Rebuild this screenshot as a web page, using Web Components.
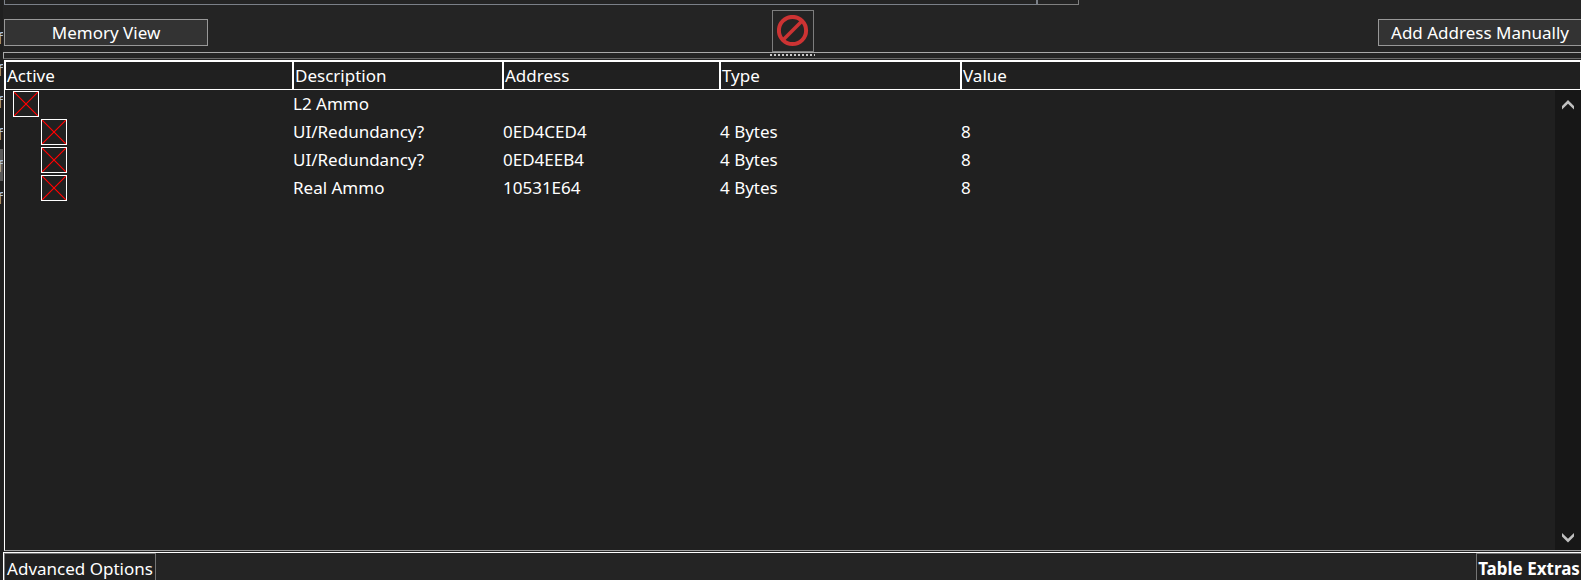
<!DOCTYPE html>
<html lang="en">
<head>
<meta charset="utf-8">
<title>Address table</title>
<style>
html, body { height: 100%; margin: 0; background: #242424; overflow: hidden; }
</style>
</head>
<body>
<address-app></address-app>
<script>
const define = (name, html, setup) => customElements.define(name, class extends HTMLElement {
  connectedCallback() {
    if (this.shadowRoot) return;
    const root = this.attachShadow({ mode: 'open' });
    root.innerHTML = html;
    if (setup) setup(this, root);
  }
});

/* Edge of the scan result list that sits left of the panel */
define('result-edge', `
<style>
  :host { display: block; width: 3px; overflow: hidden; background: #1f1f1f; padding-top: 21px; box-sizing: border-box; }
  div { height: 32px; display: flex; justify-content: flex-end; align-items: center; color: #b4c4d8; }
  div.on { background: #5a5a5a; }
</style>
<div>f</div><div>f</div><div>f</div><div>f</div><div class="on">f</div><div>f</div>`);

/* Lower edge of the panel above, with its small end segment */
define('upper-edge', `
<style>
  :host { display: flex; height: 5px; width: calc(68% + 2px); margin-left: 1px; }
  div { box-sizing: border-box; border: 1px solid #7b8088; border-top: 0; }
  .main { flex: 1; border-right-width: 2px; }
  .end { width: 41px; border-color: #808080; border-left: 0; }
</style>
<div class="main"></div><div class="end"></div>`);

define('tool-button', `
<style>
  :host { display: block; }
  button { box-sizing: border-box; width: 100%; height: 100%; margin: 0; padding: 0; font: inherit; color: #fff;
    background: var(--face, #333); border: 1px solid var(--edge, #989898); display: flex; align-items: center; justify-content: center; white-space: nowrap; }
</style>
<button type="button"><slot></slot></button>`, (host, root) => {
  const label = host.getAttribute('label');
  if (label) root.querySelector('button').setAttribute('aria-label', label);
});

define('tool-row', `
<style>
  :host { display: grid; grid-template-columns: 1fr auto 1fr; height: 47px; margin: 0 -1px 0 1px; align-items: start; box-sizing: border-box; padding-top: 5px; }
  .side { width: 204px; height: 27px; margin-top: 9px; }
  .right { justify-self: end; }
  .stop { width: 42px; height: 42px; --face: #242424; --edge: #7d7d7d; }
  svg { display: block; }
</style>
<tool-button class="side">Memory View</tool-button>
<tool-button class="stop" label="Delete selected addresses"><svg width="32" height="32" viewBox="0 0 32 32" fill="none" stroke="#cc3333" stroke-width="4"><circle cx="15.5" cy="15.5" r="13.6"/><path d="M6 25L25 6" stroke-width="3.6"/></svg></tool-button>
<tool-button class="side right">Add Address Manually</tool-button>`);

/* Splitter strip with a dotted grip under the stop button */
define('split-bar', `
<style>
  :host { display: flex; justify-content: center; height: 7px; box-sizing: border-box; border: solid #a9a9a9; border-width: 1px 0 1px 1px; border-bottom-color: #6a6a6a; }
  i { width: 45px; height: 2px; margin-top: 1px; background: repeating-linear-gradient(90deg, #c8c8c8 0 2px, transparent 2px 4px); }
</style><i></i>`);

define('scroll-strip', `
<style>
  :host { display: flex; flex-direction: column; justify-content: space-between; background: #171717; box-sizing: border-box; padding: 9px 0 6px; }
  button { display: flex; justify-content: center; width: 100%; height: 12px; padding: 0; border: 0; background: none; }
</style>
<button type="button" aria-label="Scroll up"><svg width="12" height="12" viewBox="0 0 12 12" fill="#c0c0c0"><path d="M6 1L12 7V10.5L6 4.8L0 10.5V7Z"/></svg></button>
<button type="button" aria-label="Scroll down"><svg width="12" height="12" viewBox="0 0 12 12" fill="#c0c0c0"><path d="M6 10.5L12 4.5V1L6 6.7L0 1V4.5Z"/></svg></button>`);

define('address-table', `
<style>
  :host { display: grid; grid-template: 30px 1fr / 1fr 26px; align-items: start; flex: 1; min-height: 0; margin: 1px 0 0 1px; background: #202020; border: solid #fff; border-width: 0 0 1px 1px; border-bottom-color: #a0a0a0; }
  scroll-strip { grid-area: 2 / 2; align-self: stretch; }
  table { grid-area: 1 / 1 / 3 / 3; border-collapse: separate; border-spacing: 0; table-layout: fixed; width: 100%; color: #fff; }
  .c1 { width: 287px; } .c2 { width: 210px; } .c3 { width: 217px; } .c4 { width: 241px; }
  th { box-sizing: border-box; height: 30px; padding: 0 0 0 1px; font-weight: 400; text-align: left; line-height: 24px; border: solid #fff; border-width: 2px 0 1px 2px; }
  th:first-child { border-left-width: 1px; }
  th:last-child { border-right-width: 1px; }
  td { height: 28px; padding: 0 0 0 1px; line-height: 28px; }
  td:first-child { padding-left: 8px; }
  tr.child td:first-child { padding-left: 36px; }
  input { appearance: none; display: block; box-sizing: border-box; width: 26px; height: 26px; margin: 0; border: 1px solid #fff;
    background: linear-gradient(45deg, transparent calc(50% - 1px), #f00 50%, transparent calc(50% + 1px)), linear-gradient(-45deg, transparent calc(50% - 1px), #f00 50%, transparent calc(50% + 1px)); }
</style>
<table>
<colgroup><col class="c1"><col class="c2"><col class="c3"><col class="c4"><col></colgroup>
<thead><tr><th>Active</th><th>Description</th><th>Address</th><th>Type</th><th>Value</th></tr></thead>
<tbody></tbody></table>
<scroll-strip></scroll-strip>`, (host, root) => {
  const rows = [
    ['L2 Ammo', '', '', ''],
    ['UI/Redundancy?', '0ED4CED4', '4 Bytes', '8'],
    ['UI/Redundancy?', '0ED4EEB4', '4 Bytes', '8'],
    ['Real Ammo', '10531E64', '4 Bytes', '8']
  ];
  root.querySelector('tbody').innerHTML = rows.map((r, i) =>
    `<tr class="${i ? 'child' : ''}"><td><input type="checkbox" aria-label="${r[0]} active"></td>${r.map(c => `<td>${c}</td>`).join('')}</tr>`).join('');
});

define('bottom-bar', `
<style>
  :host { display: flex; justify-content: space-between; height: 28px; box-sizing: border-box; margin-top: 1px; border: solid #fff; border-width: 1px 0 0 1px; overflow: hidden; }
  tool-button { height: 30px; --face: #202020; --edge: #747474; }
  .adv { width: 152px; } .extra { width: 106px; margin-right: -1px; font-weight: 700; }
</style>
<tool-button class="adv">Advanced Options</tool-button><tool-button class="extra">Table Extras</tool-button>`);

define('address-app', `
<style>
  :host { display: flex; height: 100%; font: 17px "Noto Sans", sans-serif; color: #fff; }
  main { flex: 1; min-width: 0; display: flex; flex-direction: column; }
</style>
<result-edge></result-edge>
<main><upper-edge></upper-edge><tool-row></tool-row><split-bar></split-bar><address-table></address-table><bottom-bar></bottom-bar></main>`);
</script>
</body>
</html>
